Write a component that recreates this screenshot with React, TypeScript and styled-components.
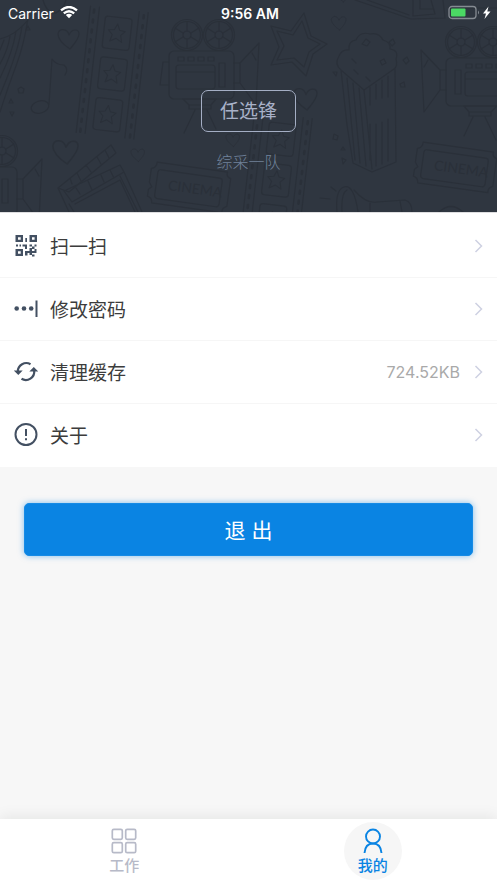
import React, { useState } from "react";
import styled, { createGlobalStyle } from "styled-components";

const GlobalStyle = createGlobalStyle`
  *, *::before, *::after { box-sizing: border-box; }
  body {
    margin: 0;
    background: #f7f7f7;
    font-family: Inter, "Noto Sans CJK SC", sans-serif;
    color: #404040;
  }
  button { font: inherit; }
`;

const Screen = styled.div`
  display: flex;
  flex-direction: column;
  min-height: 100vh;
`;

const Header = styled.header`
  position: relative;
  overflow: hidden;
  padding-bottom: 38px;
  background: #2f3640;
`;

const Doodles = styled.svg`
  position: absolute;
  inset: 0;
  width: 100%;
  height: 100%;
  fill: none;
  stroke: #2a3039;
  stroke-width: 1.2;
  stroke-linejoin: round;
  stroke-linecap: round;
`;

const DoodleText = styled.text`
  fill: #2a3039;
  stroke: none;
  font-family: Lato, sans-serif;
  font-size: 14px;
`;

const StatusBar = styled.div`
  position: relative;
  display: grid;
  grid-template-columns: 1fr auto 1fr;
  align-items: center;
  height: 26px;
  padding: 0 5px 0 8px;
  color: #fff;
  font-size: 14px;
`;

const StatusGroup = styled.div<{ $end?: boolean }>`
  display: flex;
  align-items: center;
  gap: 6px;
  justify-content: ${(p) => (p.$end ? "flex-end" : "flex-start")};
`;

const Clock = styled.time`
  font-weight: 600;
`;

const Profile = styled.div`
  position: relative;
  display: flex;
  flex-direction: column;
  align-items: center;
  gap: 18px;
  padding-top: 64px;
`;

const Name = styled.h1`
  margin: 0;
  padding: 2px 18px 0;
  border: 1px solid #a4aec4;
  border-radius: 7px;
  color: #a8b1c8;
  font-size: 19px;
  font-weight: 400;
  line-height: 38px;
`;

const Team = styled.p`
  margin: 0;
  color: #71839b;
  font-size: 16px;
  font-weight: 300;
  line-height: 24px;
`;

const Menu = styled.ul`
  margin: 0;
  padding: 2px 0 1px;
  list-style: none;
  background: #fff;
  border-top: 1px solid #dedee0;
`;

const MenuItem = styled.li`
  & + & { border-top: 1px solid #f6f6f6; }
`;

const MenuButton = styled.button`
  display: flex;
  align-items: center;
  gap: 12px;
  width: 100%;
  height: 62px;
  padding: 0 13px 0 14px;
  border: 0;
  background: none;
  color: #3c3c3c;
  text-align: left;
  cursor: pointer;
`;

const MenuLabel = styled.span`
  flex: 1;
  padding-bottom: 2px;
  font-size: 19px;
  font-weight: 400;
`;

const MenuValue = styled.span`
  color: #a9a9a9;
  font-size: 16px;
`;

const Icon = styled.svg`
  flex: none;
  display: block;
`;

const Content = styled.main`
  flex: 1;
`;

const Actions = styled.div`
  padding: 36px 24px;
`;

const LogoutButton = styled.button`
  display: block;
  width: 100%;
  height: 53px;
  padding: 0 0 2px;
  border: 1px solid #168be6;
  border-radius: 5px;
  background: #0a84e3;
  box-shadow: 0 0 6px rgba(10, 132, 227, 0.5);
  color: #fff;
  font-size: 21px;
  font-weight: 400;
  cursor: pointer;
`;

const TabBar = styled.nav`
  position: sticky;
  bottom: 0;
  display: grid;
  grid-template-columns: 1fr 1fr;
  justify-items: center;
  align-items: center;
  height: 64px;
  background: #fff;
  box-shadow: 0 -2px 14px rgba(0, 20, 10, 0.08);
`;

const Tab = styled.button<{ $active: boolean }>`
  display: flex;
  flex-direction: column;
  align-items: center;
  justify-content: center;
  gap: 2px;
  width: 58px;
  height: 58px;
  padding: 2px 0 0;
  border: 0;
  border-radius: 50%;
  background: ${(p) => (p.$active ? "#f6f6f6" : "transparent")};
  color: ${(p) => (p.$active ? "#0a84e3" : "#b7bac8")};
  font-size: 15px;
  font-weight: 500;
  line-height: 20px;
  cursor: pointer;
`;

const Heart = ({ x, y, s = 1 }: { x: number; y: number; s?: number }) => (
  <path
    transform={`translate(${x} ${y}) scale(${s})`}
    d="M1 10C-5 6-11 0-11-5C-10-11-2-11 0-4C3-11 10-10 10-5C10 0 5 5 1 10Z"
  />
);

const STAR = "M0-11L3-4L10-3L5 2L7 10L0 6L-7 10L-5 2L-10-3L-3-4Z";

const Film = ({ x, y }: { x: number; y: number }) => (
  <g transform={`translate(${x} ${y}) rotate(6.5)`}>
    <path d="M-29-65V62M-20-65V62M20-65V62M29-65V62" />
    <path d="M-25-62V62M25-62V62" strokeWidth="2.5" strokeDasharray="3 7" />
    {[-41, 0, 41].map((cy) => (
      <g key={cy} transform={`translate(0 ${cy})`}>
        <rect x="-13" y="-16" width="27" height="32" rx="3" />
        <path transform="scale(.85)" d={STAR} />
      </g>
    ))}
  </g>
);

const Reel = ({ x }: { x: number }) => (
  <g transform={`translate(${x} -40)`}>
    <circle r="15.5" />
    <circle r="13.5" />
    <circle r="4" />
    <path d="M0-4V-13M4-2L12-7M4 2L12 7M0 4V13M-4 2L-12 7M-4-2L-12-7" />
  </g>
);

const Camera = ({ x, y, flip }: { x: number; y: number; flip?: boolean }) => (
  <g transform={`translate(${x} ${y}) scale(${flip ? -1 : 1} 1)`}>
    <Reel x={-15} />
    <Reel x={17} />
    <rect x="-33" y="-24" width="65" height="48" rx="5" />
    <rect x="-26" y="-10" width="39" height="24" rx="3" />
    <path d="M-25-3H12M17-12H23V12H17ZM-34-13H-39L-42 10H-34M32-12H38V8H32M38-12L57-32L54 30L38 8M50-22L54-15M-19 24H14L9 30H-13ZM-13 30V34H9V30M-7 35L-18 58M5 35L14 54" />
    {[-24, -14, -4, 6].map((bx) => (
      <rect key={bx} x={bx} y="-18" width="6" height="4" />
    ))}
  </g>
);

const Ticket = ({ x, y }: { x: number; y: number }) => (
  <g transform={`translate(${x} ${y}) rotate(8)`}>
    <path d="M-36-21H35Q34-16 39-15V13Q34 15 35 20H-36Q-36 15-41 14V7L-38 4L-41 0V-14Q-36-15-36-21Z" />
    <rect x="-34" y="-14" width="65" height="29" rx="3" />
    <DoodleText x="-22" y="5">CINEMA</DoodleText>
  </g>
);

const Backdrop = () => (
  <Doodles viewBox="0 0 497 212" preserveAspectRatio="xMidYMid slice" aria-hidden="true">
    <path d="M28 18Q24 45 16 66T0 112M22 26Q19 50 0 95M16 31Q13 52 0 78M10 36Q8 50 0 64M4 40L0 50M0 39Q16 35 28 20M43 0Q47 14 56 13Q64 8 66 0" />
    <path d="M28 26l2 4-4 0zM21 87l3 2-1 4-4 0-1-4zM11 99l2 4-4 0zM10 112l4 0-2 4z" />
    <path d="M49 104L52 59Q56 65 64 65Q69 69 65 75" />
    <ellipse cx="40" cy="107" rx="9" ry="6" transform="rotate(-16 40 107)" />
    <Heart x={69} y={39} />
    <Heart x={66} y={152} s={1.2} />
    <Heart x={138} y={155} s={0.65} />
    <Heart x={233} y={140} s={0.65} />
    <Heart x={339} y={23} s={0.7} />
    <Heart x={306} y={99} s={1.1} />
    <Heart x={343} y={-4} s={0.6} />
    <Film x={112} y={74} />
    <Film x={276} y={180} />
    <Camera x={202} y={75} />
    <Camera x={478} y={82} flip />
    <Camera x={-15} y={191} />
    <path d="M304 13L311 36L327 44L313 54L306 76L292 62L271 65L279 47L271 26L291 31Z" />
    <path d="M302 21L308 38L320 44L309 52L304 67L294 58L277 60L284 46L277 31L293 35Z" />
    <path d="M341 70Q334 64 339 56Q342 49 349 50Q348 41 356 40Q360 31 370 34Q379 32 383 40Q391 42 390 49Q399 50 396 59Q398 66 394 69L364 90L341 70L347 125L353 163L372 172L396 162L395 69" />
    <path d="M347 78L355 160M353 83L360 163M359 88L366 166M364 90L372 169M370 87V105M376 84V99M382 80V98M388 76V97M370 124V160M376 124V166M382 122V164M388 119V161" />
    <path d="M362 44l4-5 4 3-3 4zM380 61l4-2 2 4-4 2zM354 70l4 4M370 81l-4-4M352 59l4 4M389 42l4-3 2 4-3 3zM403 60l4-3 2 4-3 3zM400 84l4-2 1 5-4 0zM333 72l4 0-1 4zM334 134l4 2-1 4-4-1zM343 147l2 3-4 0zM342 158l4 2-3 4z" />
    <path d="M355 0L411 19L445 18L443 0M413 0V16L435 14L431 0M367 0L409 15M420 0V9H434M450 8H497" />
    <Ticket x={190} y={188} />
    <Ticket x={456} y={168} />
    <path d="M58 188L111 145L116 153L69 192ZM64 191L120 165L124 172L72 202ZM72 184L70 178M81 181L77 173M91 172L86 165M101 164L97 157M109 158L105 150M80 194L76 188M92 190L88 181M104 182L101 175M114 178L110 170M58 188L69 212M124 172L142 212M120 176L138 212M75 204L120 180L135 212M69 204L74 212" />
    <path d="M337 212Q335 190 344 187Q354 184 358 212M342 212Q341 193 347 190M354 190Q366 204 377 202L405 200Q412 202 412 212M370 203V212M400 201L402 212M320 198L330 199M331 187L336 191M439 212Q451 201 463 212" />
  </Doodles>
);

const WifiIcon = () => (
  <Icon width="18" height="14" viewBox="0 0 18 14" role="img" aria-label="Wi-Fi">
    <path d="M1 4.400Q9-2.400 17 4.400M3.800 7.400Q9 3 14.200 7.400" fill="none" stroke="#fff" strokeWidth="2.300" />
    <path d="M5.800 9Q9 6.500 12.200 9L9 12.300Z" fill="#fff" />
  </Icon>
);

const BatteryIcon = () => (
  <Icon width="44" height="16" viewBox="0 0 44 16" role="img" aria-label="Battery charging">
    <rect x="1" y="1.5" width="27" height="12" rx="3" fill="none" stroke="#858b92" strokeWidth="1.3" />
    <rect x="3" y="3.5" width="14.5" height="8" rx="1" fill="#4bd964" />
    <path d="M30 5.5Q32 7.500 30 9.500Z" fill="#858b92" />
    <path d="M40.500 1.500L35 8.600H38L36.500 14L42.500 6.500H39.300Z" fill="#fff" />
  </Icon>
);

const ScanIcon = () => (
  <Icon width="24" height="24" viewBox="0 0 24 24" fill="#435062" aria-hidden="true">
    <path fillRule="evenodd" d="M1.500 1H9V8H1.500ZM4 3.200V5.800H6.700V3.200ZM15.500 1H23V8H15.500ZM18 3.200V5.800H20.600V3.200ZM1.500 15H9V22H1.500ZM4 17.200V19.800H6.700V17.200Z" />
    <path d="M11.300 4H13V8H11.300ZM2 10.500H4V12.500H2ZM8.500 10.500H13V15H11V12.500H8.500ZM5.500 10.500H7V12.500H5.500ZM15.500 10.500H18V12.500H15.500ZM20.500 10.500H22.500V12.500H20.500ZM18 12.500H20.500V15H18ZM15.500 14H18V17H15.500ZM20.500 15H22.500V19H20.500ZM11 17H15.500V19H13.500V21.500H11ZM15.500 17H20.500V19H18V21H15.500ZM18 20.500H20.500V22.500H18Z" />
  </Icon>
);

const PasswordIcon = () => (
  <Icon width="24" height="24" viewBox="0 0 24 24" fill="#435062" aria-hidden="true">
    <circle cx="2.7" cy="11.500" r="2.300" />
    <circle cx="10" cy="11.500" r="2.300" />
    <circle cx="17.200" cy="11.500" r="2.300" />
    <rect x="21.500" y="3.500" width="2" height="16.500" />
  </Icon>
);

const RefreshIcon = () => (
  <Icon width="24" height="24" viewBox="0 0 24 24" fill="none" aria-hidden="true">
    <path d="M16.500 4.200A8.500 8.500 0 0 0 3.800 11.500M7.500 18.800A8.500 8.500 0 0 0 20.200 10.500" stroke="#435062" strokeWidth="2.200" />
    <path d="M-.2 10.500H8.700L4.300 15ZM15.300 11.500H24.200L19.800 7Z" fill="#435062" />
  </Icon>
);

const AboutIcon = () => (
  <Icon width="24" height="24" viewBox="0 0 24 24" fill="none" stroke="#435062" strokeWidth="2" aria-hidden="true">
    <circle cx="12" cy="11.500" r="10.500" />
    <path d="M12 6V13M12 15.200V17.200" />
  </Icon>
);

const ChevronIcon = () => (
  <Icon width="12" height="16" viewBox="0 0 12 16" fill="none" stroke="#ced1e2" strokeWidth="1.500" aria-hidden="true">
    <path d="M3.500 2L9.500 8L3.500 14" />
  </Icon>
);

const WorkIcon = () => (
  <Icon width="26" height="26" viewBox="0 0 26 26" fill="none" stroke="currentColor" strokeWidth="1.700" aria-hidden="true">
    <rect x="1.300" y="1.300" width="10" height="10" rx="1.500" />
    <rect x="14.700" y="1.300" width="10" height="10" rx="1.500" />
    <rect x="1.300" y="14.700" width="10" height="10" rx="1.500" />
    <rect x="14.700" y="14.700" width="10" height="10" rx="1.500" />
  </Icon>
);

const MineIcon = () => (
  <Icon width="26" height="26" viewBox="0 0 26 26" fill="none" stroke="currentColor" strokeWidth="1.900" aria-hidden="true">
    <circle cx="13" cy="8.500" r="7" />
    <path d="M4.500 25C5 18.500 8.500 15.500 13 15.500S21 18.500 21.500 25" />
  </Icon>
);

const menuItems = [
  { label: "扫一扫", icon: <ScanIcon /> },
  { label: "修改密码", icon: <PasswordIcon /> },
  { label: "清理缓存", icon: <RefreshIcon />, value: "724.52KB" },
  { label: "关于", icon: <AboutIcon /> },
];

const tabs = [
  { id: "work", label: "工作", icon: <WorkIcon /> },
  { id: "mine", label: "我的", icon: <MineIcon /> },
];

export default function App() {
  const [active, setActive] = useState("mine");

  return (
    <Screen lang="zh-CN">
      <GlobalStyle />
      <Header>
        <Backdrop />
        <StatusBar>
          <StatusGroup>
            <span>Carrier</span>
            <WifiIcon />
          </StatusGroup>
          <Clock>9:56 AM</Clock>
          <StatusGroup $end>
            <BatteryIcon />
          </StatusGroup>
        </StatusBar>
        <Profile>
          <Name>任选锋</Name>
          <Team>综采一队</Team>
        </Profile>
      </Header>
      <Content>
        <Menu>
          {menuItems.map((item) => (
            <MenuItem key={item.label}>
              <MenuButton type="button">
                {item.icon}
                <MenuLabel>{item.label}</MenuLabel>
                {item.value && <MenuValue>{item.value}</MenuValue>}
                <ChevronIcon />
              </MenuButton>
            </MenuItem>
          ))}
        </Menu>
        <Actions>
          <LogoutButton type="button">退 出</LogoutButton>
        </Actions>
      </Content>
      <TabBar>
        {tabs.map((tab) => (
          <Tab
            key={tab.id}
            type="button"
            $active={tab.id === active}
            aria-current={tab.id === active ? "page" : undefined}
            onClick={() => setActive(tab.id)}
          >
            {tab.icon}
            {tab.label}
          </Tab>
        ))}
      </TabBar>
    </Screen>
  );
}
